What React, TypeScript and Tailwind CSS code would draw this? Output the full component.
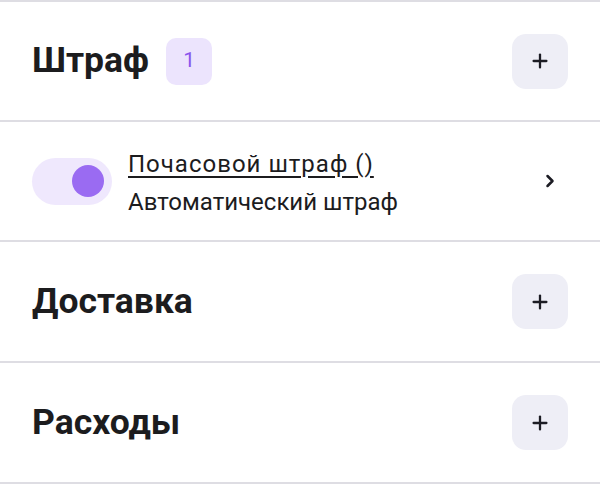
import { Plus, ChevronRight } from "lucide-react";

// Fines / delivery / expenses sections

function SectionHeader({ title, count, h }: { title: string; count?: number; h: string }) {
  return (
    <div className={`${h} border-b-2 border-[#dedde3] flex items-center pl-[32px] pr-[32px]`}>
      <h2 className="text-[35.5px] font-bold text-[#1c1c1e] leading-none">{title}</h2>
      {count !== undefined && (
        <span className="ml-[17px] w-[46px] h-[47px] rounded-[10px] bg-[#ece4fd] text-[#8a55ec] text-[21px] flex items-center justify-center">
          {count}
        </span>
      )}
      <button className="ml-auto w-[56px] h-[55px] rounded-[14px] bg-[#eeeef6] flex items-center justify-center text-[#1c1c24]">
        <Plus size={22} strokeWidth={2.5} />
      </button>
    </div>
  );
}

export default function App() {
  return (
    <div className="w-[600px] h-[490px] bg-white border-t-2 border-[#dedde3] overflow-hidden" style={{ fontFamily: "Roboto, sans-serif" }}>
      <SectionHeader title="Штраф" count={1} h="h-[120px]" />

      <div className="h-[120px] border-b-2 border-[#dedde3] flex items-center pl-[32px] pr-[40px]">
        <div className="w-[80px] h-[47px] rounded-full bg-[#efe8fd] flex items-center justify-end pr-[8px] shrink-0">
          <div className="w-[32px] h-[32px] rounded-full bg-[#9a6bf2]" />
        </div>
        <div className="ml-4 mt-[3px] flex flex-col gap-[8px]">
          <span className="text-[24px] tracking-[1px] text-[#1c1c1e] underline underline-offset-[4px] leading-tight">Почасовой штраф ()</span>
          <span className="text-[24px] text-[#1c1c1e] leading-tight">Автоматический штраф</span>
        </div>
        <ChevronRight className="ml-auto text-[#1c1c24]" size={20} strokeWidth={3} />
      </div>

      <SectionHeader title="Доставка" h="h-[121px]" />
      <SectionHeader title="Расходы" h="h-[121px]" />
    </div>
  );
}
